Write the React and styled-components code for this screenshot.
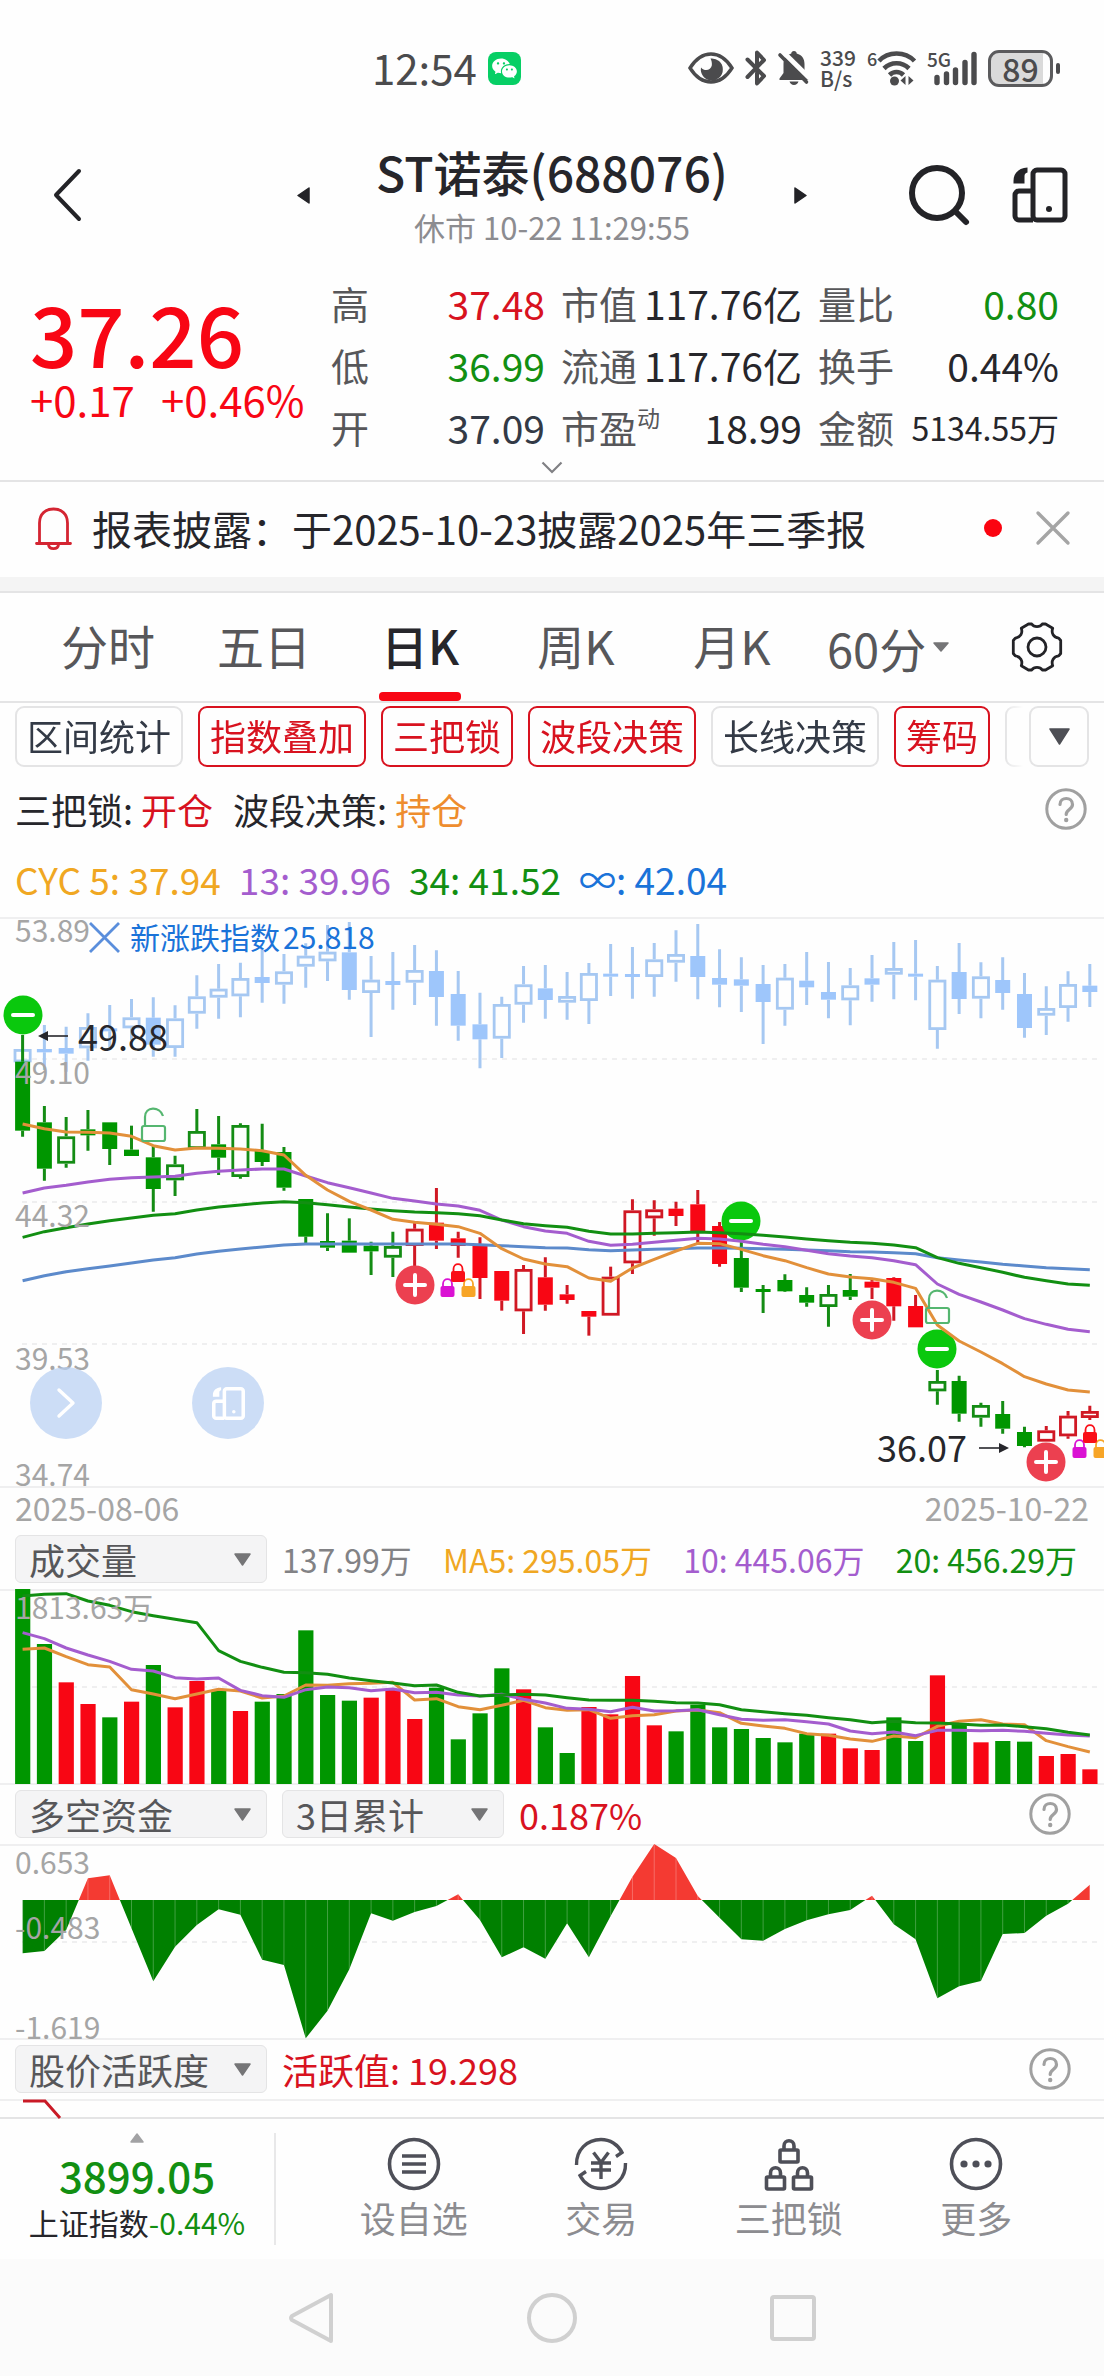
import React from "react";
import styled, { createGlobalStyle } from "styled-components";
import { RiWechatFill } from "react-icons/ri";

const FONT = '"Noto Sans CJK SC", "Noto Sans", sans-serif';

const C = {
  ink: "#26262b",
  slate: "#333a46",
  mid: "#57575a",
  soft: "#8c8c90",
  faint: "#a5a5a5",
  line: "#e4e4e5",
  rule: "#efeff0",
  status: "#4b4b4d",
  red: "#d8121f",
  hot: "#f80614",
  green: "#128f12",
  bar: "#009600",
  orange: "#e2903a",
  amber: "#f0a722",
  purple: "#a45dce",
  blue: "#1a73d9",
  steel: "#5c8acb",
  sky: "#9ec6fb",
};

const GlobalStyle = createGlobalStyle`
  *, *::before, *::after { box-sizing: border-box; }
  body { margin: 0; background: #fefefe; color: ${C.ink}; font-family: ${FONT}; }
  button, select { font: inherit; color: inherit; border: 0; background: none; padding: 0; margin: 0; border-radius: 0; }
  svg { display: block; overflow: visible; }
  h1, p, dl, dd, dt { margin: 0; font-weight: inherit; }
`;

/* ---------- shared parts ---------- */

const Screen = styled.div`
  display: flex;
  flex-direction: column;
  overflow: hidden;
`;

const IconButton = styled.button`
  display: flex;
  align-items: center;
  justify-content: center;
`;

const Tint = styled.span`
  color: ${(p) => p.$color};
`;

/* ---------- status bar ---------- */

const StatusBar = styled.header`
  display: flex;
  align-items: center;
  justify-content: space-between;
  height: 136px;
  padding: 0 44px 0 372px;
  color: ${C.status};
`;

const StatusGroup = styled.div`
  display: flex;
  align-items: center;
  gap: 11px;
`;

const Clock = styled.time`
  font-size: 42px;
  line-height: 60px;
  padding-bottom: 2px;
`;

const WeChatBadge = styled.span`
  display: flex;
  align-items: center;
  justify-content: center;
  width: 33px;
  height: 33px;
  border-radius: 8px;
  background: #07cf65;
  color: #fff;
`;

const NetSpeed = styled.span`
  display: flex;
  flex-direction: column;
  width: 36px;
  font-size: 21px;
  line-height: 21px;
  font-weight: 500;
`;

const Battery = styled.span`
  display: flex;
  align-items: center;
  gap: 3px;

  &::after {
    content: "";
    width: 4px;
    height: 11px;
    border-radius: 2px;
    background: ${C.status};
  }
`;

const BatteryBody = styled.span`
  display: flex;
  align-items: center;
  justify-content: center;
  width: 65px;
  height: 37px;
  border: 3px solid #5b5b5d;
  border-radius: 11px;
  background: linear-gradient(to right, #dadada 88%, #fefefe 88%);
  font-size: 32px;
  line-height: 30px;
  font-weight: 500;
`;

/* ---------- title bar ---------- */

const TitleBar = styled.div`
  display: flex;
  align-items: center;
  height: 118px;
`;

const TitleSide = styled.div`
  display: flex;
  align-items: center;
  flex: 0 0 310px;
  justify-content: space-between;
  padding: ${(p) => (p.$end ? "0 36px 0 0" : "0 0 0 52px")};
`;

const TitleActions = styled.div`
  display: flex;
  align-items: center;
  gap: 42px;
`;

const TitleBlock = styled.div`
  flex: 1;
  display: flex;
  flex-direction: column;
  align-items: center;
  gap: 4px;
  white-space: nowrap;
`;

const StockName = styled.h1`
  font-size: 48px;
  line-height: 60px;
  font-weight: 500;
`;

const StockTime = styled.p`
  font-size: 31px;
  line-height: 44px;
  color: ${C.soft};
`;

/* ---------- quote ---------- */

const Quote = styled.section`
  padding: 18px 45px 0 30px;
  border-bottom: 2px solid ${C.line};
`;

const QuoteGrid = styled.div`
  display: grid;
  grid-template-columns: 285fr 214fr 241fr 241fr;
  column-gap: 16px;
  white-space: nowrap;
`;

const PriceBlock = styled.div`
  display: flex;
  flex-direction: column;
  padding-top: 18px;
  color: ${C.hot};
`;

const Price = styled.strong`
  font-size: 83px;
  line-height: 84px;
  font-weight: 500;
`;

const Change = styled.span`
  display: flex;
  gap: 26px;
  font-size: 42px;
  line-height: 50px;
`;

const StatList = styled.dl`
  display: flex;
  flex-direction: column;
`;

const Stat = styled.div`
  display: flex;
  justify-content: space-between;
  font-size: 38px;
  line-height: 62px;
`;

const StatLabel = styled.dt`
  display: flex;
  color: ${C.mid};
`;

const StatMark = styled.sup`
  font-size: 23px;
  line-height: 42px;
  vertical-align: top;
`;

const StatValue = styled.dd`
  color: ${(p) => p.$color || C.ink};
  font-size: ${(p) => (p.$small ? 32 : 39)}px;
`;

const ExpandButton = styled(IconButton)`
  width: 100%;
  height: 22px;
  padding: 0 0 4px 15px;
`;

/* ---------- notice ---------- */

const Notice = styled.section`
  display: flex;
  align-items: center;
  height: 95px;
  padding: 0 34px 3px 35px;
`;

const NoticeText = styled.p`
  flex: 1;
  margin-left: 20px;
  font-size: 40px;
  line-height: 56px;
  white-space: nowrap;
`;

const Dot = styled.span`
  width: 18px;
  height: 18px;
  margin-right: 34px;
  border-radius: 50%;
  background: #fb0410;
`;

const Band = styled.div`
  height: 16px;
  background: #f4f4f4;
  border-bottom: 2px solid ${C.line};
`;

/* ---------- period tabs ---------- */

const Tabs = styled.nav`
  display: flex;
  height: 110px;
  padding-left: 30px;
  border-bottom: 2px solid ${C.line};
`;

const TabCell = styled.div`
  flex: 1;
  display: flex;
  align-items: center;
  justify-content: center;
  gap: 6px;
`;

const Tab = styled.button`
  position: relative;
  height: 100%;
  padding-bottom: 5px;
  font-size: 47px;
  font-weight: ${(p) => (p.$active ? 500 : 400)};
  color: ${(p) => (p.$active ? C.ink : C.mid)};

  &::after {
    content: "";
    display: ${(p) => (p.$active ? "block" : "none")};
    position: absolute;
    left: 50%;
    bottom: 0;
    width: 82px;
    height: 9px;
    margin-left: -41px;
    border-radius: 4px;
    background: ${C.hot};
  }
`;

const TabSelect = styled.select`
  appearance: none;
  height: 68px;
  padding-bottom: 5px;
  font-size: 47px;
  color: ${C.mid};
`;

const GearCell = styled(IconButton)`
  flex: 0 0 138px;
  padding-left: 3px;
`;

/* ---------- chips ---------- */

const ChipRow = styled.div`
  display: flex;
  padding: 3px 15px 0;
`;

const ChipScroller = styled.div`
  flex: 1;
  display: flex;
  gap: 15px;
  overflow: hidden;
  min-width: 0;
  mask-image: linear-gradient(to right, #000 calc(100% - 24px), transparent calc(100% - 6px));
`;

const Chip = styled.button`
  flex: none;
  height: 61px;
  min-width: 96px;
  padding: 0 10px 3px;
  border: 2px solid ${(p) => (p.$on ? C.red : C.line)};
  border-radius: 9px;
  font-size: 36px;
  line-height: 54px;
  color: ${(p) => (p.$on ? C.red : C.slate)};
  white-space: nowrap;
`;

const ChipMore = styled(IconButton)`
  flex: none;
  width: 60px;
  height: 61px;
  border: 2px solid ${C.line};
  border-radius: 9px;
`;

/* ---------- info lines ---------- */

const InfoRow = styled.div`
  display: flex;
  align-items: center;
  justify-content: space-between;
  height: ${(p) => p.$height}px;
  margin-bottom: ${(p) => p.$after || 0}px;
  padding: 0 17px 0 15px;
  font-size: ${(p) => p.$size}px;
  line-height: 56px;
  white-space: pre;
`;

const Legend = styled.div`
  display: flex;
  gap: ${(p) => p.$gap}px;
`;

/* ---------- charts ---------- */

const ChartBox = styled.section`
  position: relative;

  > svg {
    width: 100%;
    height: auto;
  }
`;

const FloatButton = styled(IconButton)`
  position: absolute;
  left: ${(p) => p.$left}px;
  bottom: 50px;
  width: 72px;
  height: 72px;
  border-radius: 50%;
  background: rgba(185, 208, 243, 0.72);
`;

const DateRow = styled.div`
  display: flex;
  justify-content: space-between;
  padding: 0 15px;
  font-size: 32px;
  line-height: 37px;
  color: ${C.faint};
`;

const PanelHead = styled.div`
  display: flex;
  align-items: center;
  padding: ${(p) => (p.$roomy ? "9px 27px 6px 15px" : "5px 33px 6px 15px")};
  gap: 15px;
  white-space: nowrap;
`;

const PickerWrap = styled.span`
  display: flex;
  align-items: center;
  flex: 0 0 ${(p) => p.$width}px;
  height: 48px;
  padding-right: 15px;
  border: 1px solid ${C.line};
  border-radius: 6px;
  background: #f4f4f5;
`;

const Picker = styled.select`
  appearance: none;
  flex: 1;
  height: 46px;
  padding-left: 13px;
  font-size: 36px;
  line-height: 46px;
  color: ${C.mid};
`;

const PanelValue = styled.span`
  flex: 1;
  font-size: 36px;
  line-height: 48px;
  color: ${C.red};
`;

const VolumeLegend = styled.div`
  flex: 1;
  display: flex;
  justify-content: space-between;
  font-size: 32px;
  line-height: 48px;
`;

/* ---------- bottom bars ---------- */

const BottomBar = styled.footer`
  display: flex;
  height: 142px;
  padding: 14px 0;
  border-top: 2px solid ${C.line};
  background: #fefefe;
`;

const IndexCard = styled.button`
  flex: 0 0 276px;
  display: flex;
  flex-direction: column;
  align-items: center;
  border-right: 2px solid #e8e8e9;
  white-space: nowrap;
`;

const IndexValue = styled.strong`
  margin-top: 6px;
  font-size: 42px;
  line-height: 52px;
  font-weight: 500;
  color: ${C.green};
`;

const IndexName = styled.span`
  margin-top: 3px;
  font-size: 30px;
  line-height: 36px;
`;

const Actions = styled.nav`
  flex: 1;
  display: flex;
  padding: 0 34px 0 44px;
`;

const Action = styled.button`
  flex: 1;
  display: flex;
  flex-direction: column;
  align-items: center;
  padding-top: 4px;
  gap: 3px;
  font-size: 36px;
  line-height: 46px;
  color: ${C.soft};
`;

const SystemBar = styled.nav`
  display: flex;
  align-items: center;
  justify-content: center;
  gap: 192px;
  height: 117px;
  background: #fbfbfb;
`;

/* ---------- icons ---------- */

const Triangle = ({ dir = "down", w = 16, h = 12, color = "#757577" }) => {
  const shape = {
    down: `1,1 ${w - 1},1 ${w / 2},${h - 1}`,
    up: `1,${h - 1} ${w - 1},${h - 1} ${w / 2},1`,
    left: `${w - 1},1 ${w - 1},${h - 1} 1,${h / 2}`,
    right: `1,1 1,${h - 1} ${w - 1},${h / 2}`,
  }[dir];
  return (
    <svg width={w} height={h} aria-hidden="true">
      <polygon points={shape} fill={color} stroke={color} strokeWidth="1.5" strokeLinejoin="round" />
    </svg>
  );
};

const HelpIcon = () => (
  <svg width="42" height="42" viewBox="0 0 42 42" fill="none" stroke="#a0a0a0">
    <circle cx="21" cy="21" r="19.2" strokeWidth="3" />
    <path d="M15 16.500c0-8 12.500-8 12.500 0 0 5-6.300 5.200-6.300 10" strokeWidth="3.200" strokeLinecap="round" />
    <circle cx="21.200" cy="32" r="1.200" strokeWidth="2" fill="#a0a0a0" />
  </svg>
);

const RotateIcon = ({ size = 56, color = "#232327", stroke = 5 }) => (
  <svg width={size} height={size} viewBox="0 0 56 56" fill="none" stroke={color} strokeWidth={stroke} strokeLinejoin="round">
    <rect x="21" y="3" width="32" height="50" rx="4" />
    <path d="M21 24H7a4 4 0 0 0-4 4v21a4 4 0 0 0 4 4h14" />
    <path d="M15.500 .5C7 1 1.500 6 1.500 14v2.500h11V9c0-2 1-3 3-3.500z" fill={color} stroke="none" />
    <circle cx="37" cy="42" r="3" fill={color} stroke="none" />
  </svg>
);

const EyeIcon = () => (
  <svg width="46" height="32" viewBox="0 0 46 32" fill="none">
    <path d="M2 16C8 6.500 15 2 23 2s15 4.500 21 14c-6 9.500-13 14-21 14S8 25.500 2 16z" stroke={C.status} strokeWidth="3.400" />
    <path d="M22.500 6.500a11 11 0 1 1-9.500 9c4 4.500 10 2.500 10.800-2 .4-2.500-.3-5-1.300-7z" fill={C.status} />
  </svg>
);

const BluetoothIcon = () => (
  <svg width="22" height="36" viewBox="0 0 22 36" fill="none" stroke={C.status} strokeWidth="4" strokeLinejoin="round" strokeLinecap="round">
    <path d="M2.500 27L19 10l-7-7.500V14M2.500 9.500L19 26l-7 7.500V23" />
  </svg>
);

const MuteIcon = () => (
  <svg width="31" height="36" viewBox="0 0 31 36">
    <path d="M16 1c1.700 0 2.700 1 2.700 2.600C24 5 26.500 9 26.500 14v9l4 5.500V30h-29v-1.500l4-5.500v-9C5.500 9 8 5 13.300 3.600 13.300 2 14.300 1 16 1zM11.500 31.500h9c-.7 2.300-2.300 3.400-4.500 3.400s-3.800-1.100-4.500-3.400z" fill={C.status} />
    <path d="M4 1l28 27.500" stroke="#fefefe" strokeWidth="5" />
    <path d="M2 5l26.500 27" stroke={C.status} strokeWidth="3.600" strokeLinecap="round" />
  </svg>
);

const WifiIcon = () => (
  <svg width="49" height="36" viewBox="0 0 49 36" fill="none" stroke={C.status} strokeWidth="4.600">
    <text x="0" y="16" fontSize="18" fontWeight="500" fontFamily={FONT} fill={C.status} stroke="none">6</text>
    <path d="M12 11c9-10 26-10 35.500 0M17 18.500c7-7 18-7 25 0M22.500 25c4-4 10-4 14 0" />
    <circle cx="27.500" cy="31" r="4.500" fill={C.status} stroke="none" />
    <path d="M38.500 26v9l-5-4.500zM41.500 35v-9l5 4.500z" fill={C.status} stroke="none" />
  </svg>
);

const SignalIcon = () => (
  <svg width="50" height="36" viewBox="0 0 50 36">
    <text x="0" y="17" fontSize="19" fontWeight="500" fontFamily={FONT} fill={C.status}>5G</text>
    <path d="M10 27.500v5M19.500 24v8.500M28.500 20v12.500M38 12.500v20M47 4.500v28" stroke={C.status} strokeWidth="5.400" strokeLinecap="round" />
  </svg>
);

const BellIcon = () => (
  <svg width="37" height="43" viewBox="0 0 37 43" fill="none" stroke="#d42532" strokeWidth="2.800" strokeLinejoin="round" strokeLinecap="round">
    <path d="M4.500 36V16C4.500 7 10.500 2 18.500 2s14 5 14 14v20M1.500 36.500h34M13.500 37.500c.5 5.500 9.500 5.500 10 0" />
  </svg>
);

const GearIcon = () => (
  <svg width="52" height="52" viewBox="0 0 52 52" fill="none" stroke="#232327" strokeWidth="2.800" strokeLinejoin="round">
    <path d="M17.500 3h3.200c2.300 3.400 8.300 3.400 10.600 0h3.200l7.200 4.300c-1.700 5 .8 9.200 6 9.800l2 2.400v13l-2 2.400c-5.200.6-7.700 4.800-6 9.800L34.500 49h-3.200c-2.300-3.400-8.300-3.400-10.600 0h-3.200l-7.200-4.300c1.700-5-.8-9.200-6-9.800l-2-2.400v-13l2-2.400c5.200-.6 7.700-4.800 6-9.800z" />
    <circle cx="26" cy="26" r="9" />
  </svg>
);

const ListIcon = () => (
  <svg width="54" height="54" viewBox="0 0 54 54" fill="none" stroke="#4e4f58" strokeWidth="3.600">
    <circle cx="27" cy="27" r="24.500" />
    <path d="M15 19h24M15 27h24M15 35h24" />
  </svg>
);

const TradeIcon = () => (
  <svg width="54" height="54" viewBox="0 0 54 54" fill="none" stroke="#4e4f58" strokeWidth="3.400">
    <path d="M2.500 28C2 13 13 2.500 27 2.500c9 0 17 5 21 13l-6 4" />
    <path d="M51.500 26c.5 15-10.500 25.500-24.500 25.500-9 0-17-5-21-13l6-4" />
    <path d="M19.500 15.500l7.500 10 7.500-10M17 26h20M17 33h20M27 25v17" />
  </svg>
);

const LocksIcon = () => (
  <svg width="54" height="54" viewBox="0 0 54 54" fill="none" stroke="#4e4f58" strokeWidth="3.600" strokeLinejoin="round">
    {[[18, 3], [4.500, 30], [31.500, 30]].map(([x, y]) => (
      <g key={x}>
        <rect x={x} y={y + 10} width="18" height="12" rx="1" />
        <path d={`M${x + 4} ${y + 10}v-4c0-7 10-7 10 0v4`} />
      </g>
    ))}
  </svg>
);

const MoreIcon = () => (
  <svg width="54" height="54" viewBox="0 0 54 54" fill="#4e4f58">
    <circle cx="27" cy="27" r="24.500" fill="none" stroke="#4e4f58" strokeWidth="3.600" />
    <circle cx="15" cy="27" r="3.600" />
    <circle cx="27" cy="27" r="3.600" />
    <circle cx="39" cy="27" r="3.600" />
  </svg>
);

/* ---------- chart data ---------- */

const W = 1104;
const STEP = 21.78;
const px = (i) => 22.6 + i * STEP;

/* [high, body top, body bottom, low, solid] */
const overlay = [
  [447, 447, 487, 487, 0], [375, 447, 457, 510, 1], [380, 444, 461, 515, 1], [340, 381, 445, 482, 0],
  [315, 385, 394, 450, 1], [297, 352, 385, 420, 0], [292, 353, 434, 470, 1], [316, 355, 444, 470, 0],
  [226, 289, 341, 386, 0], [192, 266, 293, 356, 0], [188, 234, 289, 352, 0], [145, 231, 249, 308, 1],
  [162, 214, 254, 311, 0], [130, 167, 200, 263, 0], [75, 155, 184, 243, 0], [66, 157, 270, 299, 1],
  [168, 239, 279, 411, 0], [156, 243, 255, 329, 1], [135, 210, 248, 315, 0], [151, 213, 291, 377, 1],
  [213, 282, 377, 422, 1], [278, 373, 418, 505, 1], [290, 312, 416, 474, 0], [198, 253, 314, 368, 0],
  [195, 265, 300, 356, 1], [216, 288, 308, 359, 0], [189, 219, 303, 372, 0], [132, 221, 230, 288, 1],
  [141, 222, 231, 296, 1], [129, 178, 231, 290, 0], [91, 162, 188, 245, 0], [72, 168, 231, 298, 1],
  [148, 234, 254, 322, 1], [172, 238, 257, 336, 1], [195, 252, 306, 432, 1], [192, 233, 329, 377, 0],
  [156, 242, 262, 315, 1], [186, 276, 299, 355, 1], [204, 256, 301, 376, 0], [165, 235, 254, 305, 1],
  [126, 204, 224, 298, 0], [120, 221, 230, 301, 1], [198, 239, 390, 446, 0], [129, 216, 297, 342, 1],
  [187, 229, 296, 355, 0], [172, 240, 279, 329, 1], [219, 282, 384, 413, 1], [259, 324, 347, 405, 0],
  [214, 252, 324, 365, 0], [192, 257, 276, 321, 1],
];

const candles = [
  [405, 485, 692, 710, 1], [618, 667, 806, 842, 1], [651, 709, 791, 803, 0], [630, 688, 706, 752, 1],
  [667, 667, 747, 795, 1], [677, 749, 768, 768, 1], [738, 772, 867, 935, 1], [767, 793, 841, 888, 0],
  [627, 693, 747, 747, 0], [648, 733, 773, 825, 1], [670, 675, 831, 836, 0], [671, 753, 786, 798, 1],
  [741, 756, 863, 872, 1], [897, 897, 1010, 1030, 1], [940, 1023, 1043, 1053, 1], [955, 1022, 1058, 1058, 1],
  [1025, 1037, 1054, 1125, 1], [995, 1038, 1073, 1131, 0], [965, 986, 1038, 1190, 0], [864, 968, 1022, 1047, 1],
  [995, 1015, 1038, 1073, 1], [1012, 1036, 1134, 1197, 1], [1113, 1113, 1202, 1232, 1], [1095, 1107, 1234, 1302, 0],
  [1072, 1132, 1214, 1232, 1], [1155, 1183, 1200, 1211, 1], [1233, 1233, 1250, 1307, 1], [1100, 1130, 1247, 1247, 0],
  [898, 931, 1090, 1122, 0], [901, 928, 955, 1007, 0], [905, 926, 948, 978, 1], [870, 913, 996, 1030, 1],
  [966, 978, 1092, 1100, 1], [1025, 1074, 1163, 1176, 1], [1155, 1167, 1174, 1239, 1], [1123, 1140, 1174, 1176, 1],
  [1162, 1185, 1208, 1220, 1], [1155, 1182, 1221, 1280, 0], [1122, 1170, 1190, 1200, 1], [1135, 1145, 1163, 1197, 1],
  [1132, 1134, 1219, 1262, 1], [1185, 1218, 1282, 1282, 1], [1410, 1443, 1474, 1514, 0], [1427, 1443, 1541, 1565, 1],
  [1508, 1515, 1553, 1580, 0], [1503, 1542, 1586, 1601, 1], [1580, 1596, 1638, 1642, 1], [1578, 1591, 1625, 1625, 0],
  [1533, 1547, 1609, 1616, 0], [1517, 1533, 1554, 1560, 0],
];
const isRed = (i) => (i >= 18 && i <= 32) || (i >= 39 && i <= 41) || i >= 47;

const costLines = [
  [C.steel, [1142, 1127, 1115, 1106, 1098, 1089, 1080, 1073, 1062, 1054, 1047, 1041, 1035, 1032, 1032, 1032, 1032, 1032, 1032, 1032, 1032, 1034, 1037, 1040, 1043, 1044, 1049, 1052, 1050, 1048, 1046, 1044, 1044, 1045, 1046, 1048, 1050, 1052, 1055, 1056, 1058, 1061, 1073, 1080, 1086, 1093, 1098, 1103, 1106, 1109]],
  [C.purple, [879, 864, 856, 846, 838, 833, 831, 829, 820, 814, 810, 807, 807, 828, 848, 863, 879, 895, 903, 912, 918, 931, 960, 980, 993, 1000, 1024, 1036, 1033, 1027, 1021, 1015, 1017, 1024, 1033, 1040, 1051, 1061, 1068, 1073, 1082, 1094, 1152, 1183, 1206, 1230, 1256, 1273, 1288, 1295]],
  [C.green, [1012, 995, 983, 972, 962, 954, 946, 941, 930, 921, 915, 909, 905, 908, 914, 921, 927, 932, 936, 938, 941, 947, 960, 971, 977, 982, 994, 1002, 1002, 1000, 998, 996, 998, 1001, 1006, 1011, 1017, 1022, 1027, 1030, 1035, 1043, 1073, 1090, 1103, 1117, 1132, 1142, 1152, 1156]],
  [C.orange, [672, 686, 696, 697, 699, 709, 737, 750, 744, 745, 747, 752, 765, 826, 870, 904, 930, 958, 967, 973, 980, 1000, 1046, 1077, 1092, 1100, 1134, 1144, 1104, 1078, 1053, 1030, 1031, 1048, 1067, 1082, 1103, 1122, 1131, 1136, 1147, 1165, 1275, 1323, 1356, 1391, 1430, 1452, 1470, 1476]],
];

const volumeTops = [207, 372, 487, 552, 592, 545, 435, 562, 483, 512, 573, 545, 522, 331, 525, 542, 533, 507, 597, 503, 658, 580, 445, 508, 622, 699, 561, 583, 468, 616, 634, 554, 622, 627, 654, 667, 641, 641, 685, 690, 592, 663, 466, 613, 667, 663, 665, 708, 702, 748];
const volumeUp = new Set([2, 3, 5, 7, 8, 10, 16, 17, 18, 23, 26, 27, 28, 29, 37, 38, 39, 42, 44, 47, 48, 49]);
const volumeLines = [
  [C.orange, [388, 384, 410, 434, 441, 509, 522, 536, 522, 508, 513, 534, 528, 495, 496, 491, 490, 487, 540, 536, 560, 569, 556, 541, 563, 571, 569, 595, 587, 584, 573, 570, 578, 610, 618, 625, 641, 646, 657, 664, 648, 653, 619, 604, 599, 612, 614, 662, 680, 696]],
  [C.purple, [338, 356, 384, 405, 424, 448, 453, 473, 477, 474, 511, 527, 532, 509, 501, 503, 512, 507, 518, 517, 525, 528, 523, 538, 549, 565, 568, 575, 562, 573, 572, 569, 584, 598, 601, 599, 605, 612, 633, 641, 636, 647, 631, 631, 632, 631, 634, 640, 645, 648]],
  [C.green, [228, 223, 221, 243, 256, 275, 287, 298, 308, 392, 424, 442, 457, 458, 463, 474, 482, 489, 497, 495, 517, 528, 525, 523, 525, 533, 540, 541, 541, 544, 548, 549, 554, 569, 575, 581, 586, 593, 599, 608, 604, 608, 609, 612, 616, 615, 620, 626, 637, 645]],
];

const flow = [520, 513, 450, 295, 286, 445, 604, 500, 435, 388, 404, 539, 555, 775, 692, 568, 400, 422, 396, 378, 343, 420, 532, 502, 536, 430, 532, 408, 290, 192, 234, 348, 413, 478, 482, 447, 421, 403, 390, 347, 433, 478, 655, 619, 603, 462, 459, 407, 371, 314];

/* ---------- chart parts ---------- */

const Candle = ({ i, row, y, edge, fill }) => {
  const [high, top, bottom, low, solid] = row;
  const x = px(i);
  const t = y(top);
  const h = Math.max(y(bottom) - t, 3);
  return (
    <g>
      <path d={`M${x} ${y(high)}V${t}M${x} ${t + h}V${y(low)}`} stroke={edge} strokeWidth="3" />
      {solid ? (
        <rect x={x - 7.5} y={t} width="15" height={h} fill={fill} />
      ) : (
        <rect x={x - 7.6} y={t + 1.4} width="15.2" height={Math.max(h - 2.8, 1)} fill="none" stroke={edge} strokeWidth="2.8" />
      )}
    </g>
  );
};

const Curve = ({ data, y, color }) => (
  <polyline points={data.map((v, i) => `${px(i)},${y(v)}`).join(" ")} fill="none" stroke={color} strokeWidth="3" strokeLinejoin="round" />
);

const Dashed = ({ y, from = 22 }) => <path d={`M${from} ${y}H1097`} stroke={C.rule} strokeWidth="2" strokeDasharray="5 5" />;
const Rule = ({ y }) => <path d={`M0 ${y}H${W}`} stroke={C.rule} strokeWidth="2" />;

const AxisText = ({ y, x = 15, children, color = C.faint, size = 30 }) => (
  <text x={x} y={y} fontFamily={FONT} fontSize={size} fill={color}>{children}</text>
);

const Marker = ({ x, y, plus }) => (
  <g>
    <circle cx={x} cy={y} r="19.5" fill={plus ? "#ec4050" : "#0ac80d"} />
    <path d={`M${x - 10} ${y}h20${plus ? `M${x} ${y - 10}v20` : ""}`} stroke="#fff" strokeWidth="4" strokeLinecap="round" />
  </g>
);

const MiniLock = ({ x, y, color }) => (
  <g>
    <rect x={x - 7} y={y + 8} width="14" height="11" rx="2" fill={color} />
    <path d={`M${x - 4.5} ${y + 9}v-3c0-6.500 9-6.500 9 0v3`} fill="none" stroke={color} strokeWidth="1.800" />
  </g>
);

const LockTrio = ({ x, y }) => (
  <g>
    <MiniLock x={x - 10.5} y={y + 15} color="#da12d3" />
    <MiniLock x={x + 10.5} y={y + 15} color="#f7a527" />
    <MiniLock x={x} y={y} color="#fa0f18" />
  </g>
);

const OpenLock = ({ x, y }) => (
  <g fill="none" stroke="#55b670" strokeWidth="2.200">
    <rect x={x} y={y + 18} width="23" height="15" rx="2" />
    <path d={`M${x + 3} ${y + 18}V${y + 9}c0-11 15-11 18-1`} />
  </g>
);

const PriceChart = () => {
  const y = (v) => v / 3 - 17;
  return (
    <svg viewBox={`0 0 ${W} 572`} role="img" aria-label="日K">
      <Rule y={1} />
      <Dashed y={142} />
      <Dashed y={285} />
      <Dashed y={427} />
      <Rule y={570} />
      {overlay.map((row, i) => <Candle key={i} i={i} row={row} y={y} edge="#a6c8f2" fill={C.sky} />)}
      {candles.map((row, i) => (
        <Candle key={i} i={i} row={row} y={y} edge={isRed(i) ? "#d01824" : "#148c14"} fill={isRed(i) ? C.hot : C.bar} />
      ))}
      <Marker x={23} y={98} />
      <Marker x={741} y={304} />
      <Marker x={937} y={432} />
      <Marker x={415} y={368} plus />
      <Marker x={872} y={403} plus />
      <Marker x={1046} y={545} plus />
      {costLines.map(([color, data]) => <Curve key={color} data={data} y={y} color={color} />)}
      <OpenLock x={142} y={191} />
      <OpenLock x={926} y={373} />
      <LockTrio x={458} y={346} />
      <LockTrio x={1090} y={507} />
      <AxisText y={25}>53.89</AxisText>
      <AxisText y={167}>49.10</AxisText>
      <AxisText y={310}>44.32</AxisText>
      <AxisText y={453}>39.53</AxisText>
      <AxisText y={569}>34.74</AxisText>
      <path d="M90 6l29 29M119 6L90 35" stroke="#5a8edc" strokeWidth="2.800" />
      <AxisText x={130} y={32} color={C.blue}>新涨跌指数</AxisText>
      <AxisText x={283} y={32} color={C.blue}>25.818</AxisText>
      <path d="M68 119H46" stroke={C.ink} strokeWidth="1.600" />
      <polygon points="38,119 48,114 48,124" fill={C.ink} />
      <AxisText x={78} y={134} size={36} color={C.ink}>49.88</AxisText>
      <path d="M979 531H1001" stroke={C.ink} strokeWidth="1.600" />
      <polygon points="1009,531 999,526 999,536" fill={C.ink} />
      <AxisText x={877} y={545} size={36} color={C.ink}>36.07</AxisText>
    </svg>
  );
};

const VolumeChart = () => {
  const y = (v) => v / 3 - 69;
  return (
    <svg viewBox={`0 0 ${W} 196`} role="img" aria-label="成交量">
      <Rule y={1} />
      <Dashed y={98} />
      <Rule y={195} />
      {volumeTops.map((v, i) => (
        <rect key={i} x={px(i) - 7.5} y={y(v)} width="15.200" height={195 - y(v)} fill={volumeUp.has(i) ? C.hot : C.bar} />
      ))}
      {volumeLines.map(([color, data]) => <Curve key={color} data={data} y={y} color={color} />)}
      <AxisText y={30}>1813.63万</AxisText>
    </svg>
  );
};

const FlowChart = () => {
  const y = (v) => v / 3 - 64;
  const zero = y(360);
  const area = `${px(0)},${zero} ${flow.map((v, i) => `${px(i)},${y(v)}`).join(" ")} ${px(49)},${zero}`;
  return (
    <svg viewBox={`0 0 ${W} 196`} role="img" aria-label="多空资金">
      <defs>
        <clipPath id="flow-in"><rect x="0" y="0" width={W} height={zero} /></clipPath>
        <clipPath id="flow-out"><rect x="0" y={zero} width={W} height={196 - zero} /></clipPath>
        <clipPath id="flow-area"><polygon points={area} /></clipPath>
      </defs>
      <Rule y={1} />
      <Dashed y={98} />
      <Rule y={195} />
      <polygon points={area} fill="#f43a32" clipPath="url(#flow-in)" />
      <polygon points={area} fill="#008000" clipPath="url(#flow-out)" />
      <g clipPath="url(#flow-area)">
        {flow.map((v, i) => (
          <path key={i} d={`M${px(i)} ${zero}V${y(v)}`} stroke="#fff" strokeOpacity="0.25" strokeWidth="1" />
        ))}
      </g>
      <AxisText y={30}>0.653</AxisText>
      <AxisText y={95}>-0.483</AxisText>
      <AxisText y={195}>-1.619</AxisText>
    </svg>
  );
};

const ActivityChart = () => (
  <svg viewBox={`0 0 ${W} 18`} role="img" aria-label="股价活跃度">
    <Rule y={1} />
    <path d="M23 2H45L60 19" fill="none" stroke="#c91a26" strokeWidth="3" />
  </svg>
);

const PanelPicker = ({ label, value, width }) => (
  <PickerWrap $width={width}>
    <Picker aria-label={label} defaultValue={value}>
      <option>{value}</option>
    </Picker>
    <Triangle w={17} h={13} />
  </PickerWrap>
);

const HelpButton = () => (
  <IconButton aria-label="帮助">
    <HelpIcon />
  </IconButton>
);

/* ---------- content ---------- */

const stats = [
  [
    { label: "高", value: "37.48", color: C.red },
    { label: "低", value: "36.99", color: C.green },
    { label: "开", value: "37.09", color: C.slate },
  ],
  [
    { label: "市值", value: "117.76亿" },
    { label: "流通", value: "117.76亿" },
    { label: "市盈", mark: "动", value: "18.99" },
  ],
  [
    { label: "量比", value: "0.80", color: C.green },
    { label: "换手", value: "0.44%" },
    { label: "金额", value: "5134.55万", small: true },
  ],
];

const chips = [
  ["区间统计", false],
  ["指数叠加", true],
  ["三把锁", true],
  ["波段决策", true],
  ["长线决策", false],
  ["筹码", true],
];

const actions = [
  ["设自选", ListIcon],
  ["交易", TradeIcon],
  ["三把锁", LocksIcon],
  ["更多", MoreIcon],
];

export default function App() {
  return (
    <>
      <GlobalStyle />
      <Screen>
        <StatusBar>
          <StatusGroup>
            <Clock>12:54</Clock>
            <WeChatBadge><RiWechatFill size={27} /></WeChatBadge>
          </StatusGroup>
          <StatusGroup>
            <EyeIcon />
            <BluetoothIcon />
            <MuteIcon />
            <NetSpeed><span>339</span><span>B/s</span></NetSpeed>
            <WifiIcon />
            <SignalIcon />
            <Battery><BatteryBody>89</BatteryBody></Battery>
          </StatusGroup>
        </StatusBar>

        <TitleBar>
          <TitleSide>
            <IconButton aria-label="返回">
              <svg width="30" height="52" viewBox="0 0 30 52" fill="none" stroke="#232327" strokeWidth="4" strokeLinecap="round" strokeLinejoin="round">
                <path d="M27 2L4 26l23 24" />
              </svg>
            </IconButton>
            <IconButton aria-label="上一只"><Triangle dir="left" w={13} h={17} color="#232327" /></IconButton>
          </TitleSide>
          <TitleBlock>
            <StockName>ST诺泰(688076)</StockName>
            <StockTime>休市 10-22 11:29:55</StockTime>
          </TitleBlock>
          <TitleSide $end>
            <IconButton aria-label="下一只"><Triangle dir="right" w={13} h={17} color="#232327" /></IconButton>
            <TitleActions>
              <IconButton aria-label="搜索">
                <svg width="62" height="62" viewBox="0 0 62 62" fill="none" stroke="#232327" strokeWidth="6" strokeLinecap="round">
                  <circle cx="29" cy="29" r="25" />
                  <path d="M48 48l10 10" />
                </svg>
              </IconButton>
              <IconButton aria-label="横屏"><RotateIcon /></IconButton>
            </TitleActions>
          </TitleSide>
        </TitleBar>

        <Quote>
          <QuoteGrid>
            <PriceBlock>
              <Price>37.26</Price>
              <Change><span>+0.17</span><span>+0.46%</span></Change>
            </PriceBlock>
            {stats.map((column, i) => (
              <StatList key={i}>
                {column.map((s) => (
                  <Stat key={s.label}>
                    <StatLabel>{s.label}{s.mark && <StatMark>{s.mark}</StatMark>}</StatLabel>
                    <StatValue $color={s.color} $small={s.small}>{s.value}</StatValue>
                  </Stat>
                ))}
              </StatList>
            ))}
          </QuoteGrid>
          <ExpandButton aria-label="展开">
            <svg width="22" height="13" viewBox="0 0 22 13" fill="none" stroke="#808084" strokeWidth="2.200"><path d="M1.500 1.500L11 11l9.500-9.500" /></svg>
          </ExpandButton>
        </Quote>

        <Notice>
          <BellIcon />
          <NoticeText>报表披露：于2025-10-23披露2025年三季报</NoticeText>
          <Dot />
          <IconButton aria-label="关闭">
            <svg width="34" height="34" viewBox="0 0 34 34" stroke="#a5a5a5" strokeWidth="3.400" strokeLinecap="round"><path d="M2 2l30 30M32 2L2 32" /></svg>
          </IconButton>
        </Notice>
        <Band />

        <Tabs>
          {["分时", "五日", "日K", "周K", "月K"].map((name) => (
            <TabCell key={name}><Tab $active={name === "日K"}>{name}</Tab></TabCell>
          ))}
          <TabCell>
            <TabSelect aria-label="分钟周期" defaultValue="60分"><option>60分</option></TabSelect>
            <Triangle w={16} h={10} />
          </TabCell>
          <GearCell aria-label="设置"><GearIcon /></GearCell>
        </Tabs>

        <ChipRow>
          <ChipScroller>
            {chips.map(([name, on]) => <Chip key={name} $on={on} aria-pressed={on}>{name}</Chip>)}
            <Chip aria-label="其他指标" />
          </ChipScroller>
          <ChipMore aria-label="全部指标"><Triangle w={21} h={17} color="#4e4f55" /></ChipMore>
        </ChipRow>

        <InfoRow $height={84} $size={36}>
          <Legend $gap={20}>
            <span>三把锁: <Tint $color={C.red}>开仓</Tint></span>
            <span>波段决策: <Tint $color="#ee8d2e">持仓</Tint></span>
          </Legend>
          <HelpButton />
        </InfoRow>
        <InfoRow $height={56} $after={10} $size={37}>
          <Legend $gap={18}>
            <Tint $color={C.amber}>CYC 5: 37.94</Tint>
            <Tint $color={C.purple}>13: 39.96</Tint>
            <Tint $color={C.green}>34: 41.52</Tint>
            <Tint $color={C.blue}>∞: 42.04</Tint>
          </Legend>
        </InfoRow>

        <ChartBox>
          <PriceChart />
          <FloatButton $left={30} aria-label="展开工具">
            <svg width="20" height="32" viewBox="0 0 20 32" fill="none" stroke="#fff" strokeWidth="3.400" strokeLinecap="round" strokeLinejoin="round"><path d="M3 3l14 13L3 29" /></svg>
          </FloatButton>
          <FloatButton $left={192} aria-label="横屏查看"><RotateIcon size={33} color="#fff" stroke={6} /></FloatButton>
        </ChartBox>
        <DateRow><span>2025-08-06</span><span>2025-10-22</span></DateRow>

        <PanelHead $roomy>
          <PanelPicker label="副图指标一" value="成交量" width={252} />
          <VolumeLegend>
            <Tint $color="#828285">137.99万</Tint>
            <Tint $color={C.amber}>MA5: 295.05万</Tint>
            <Tint $color={C.purple}>10: 445.06万</Tint>
            <Tint $color={C.green}>20: 456.29万</Tint>
          </VolumeLegend>
        </PanelHead>
        <ChartBox><VolumeChart /></ChartBox>

        <PanelHead>
          <PanelPicker label="副图指标二" value="多空资金" width={252} />
          <PanelPicker label="统计周期" value="3日累计" width={222} />
          <PanelValue>0.187%</PanelValue>
          <HelpButton />
        </PanelHead>
        <ChartBox><FlowChart /></ChartBox>

        <PanelHead>
          <PanelPicker label="副图指标三" value="股价活跃度" width={252} />
          <PanelValue>活跃值: 19.298</PanelValue>
          <HelpButton />
        </PanelHead>
        <ChartBox><ActivityChart /></ChartBox>

        <BottomBar>
          <IndexCard>
            <Triangle dir="up" w={14} h={10} color="#a2a2a4" />
            <IndexValue>3899.05</IndexValue>
            <IndexName>上证指数<Tint $color={C.green}>-0.44%</Tint></IndexName>
          </IndexCard>
          <Actions>
            {actions.map(([name, Icon]) => <Action key={name}><Icon />{name}</Action>)}
          </Actions>
        </BottomBar>

        <SystemBar>
          <IconButton aria-label="系统返回">
            <svg width="46" height="52" viewBox="0 0 46 52" fill="none" stroke="#d0d0d0" strokeWidth="4" strokeLinejoin="round"><path d="M43 3v46L4 28q-2-2 0-4z" /></svg>
          </IconButton>
          <IconButton aria-label="主屏幕">
            <svg width="52" height="52" viewBox="0 0 52 52" fill="none" stroke="#d0d0d0" strokeWidth="4"><circle cx="26" cy="26" r="23" /></svg>
          </IconButton>
          <IconButton aria-label="最近任务">
            <svg width="46" height="48" viewBox="0 0 46 48" fill="none" stroke="#d0d0d0" strokeWidth="4"><rect x="2" y="3" width="42" height="42" rx="2" /></svg>
          </IconButton>
        </SystemBar>
      </Screen>
    </>
  );
}
